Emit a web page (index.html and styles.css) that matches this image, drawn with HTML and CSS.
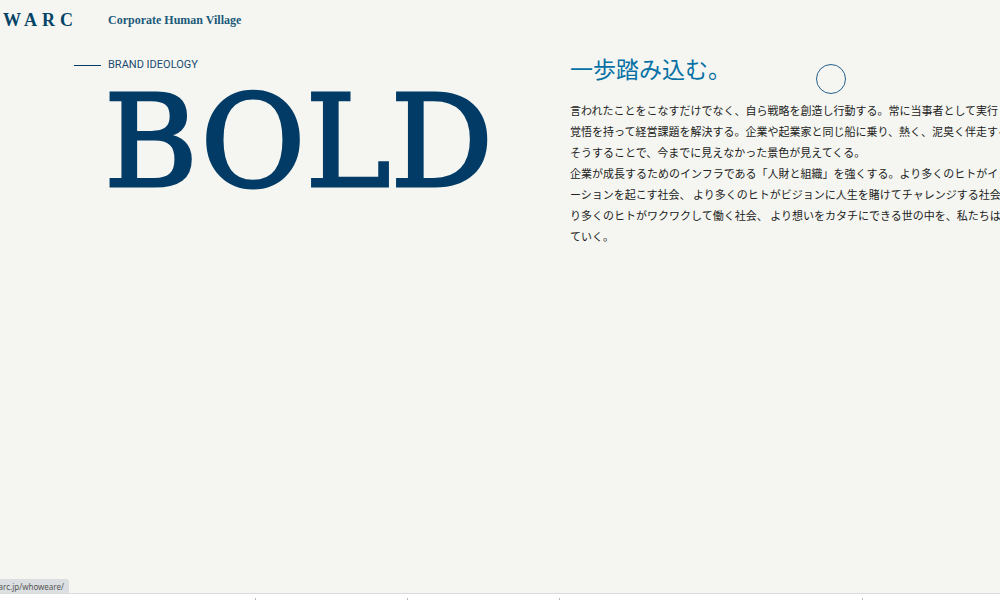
FILE: index.html
```html
<!DOCTYPE html>
<html lang="ja">
<head>
    <meta charset="UTF-8">
    <meta name="viewport" content="width=device-width, initial-scale=1.0">
    <title>WARC | Corporate Human Village</title>
    <link rel="stylesheet" href="styles.css">
</head>
<body>
    <!-- Header -->
    <header class="header">
        <a class="logo" href="#">WARC</a>
        <p class="tagline">Corporate Human Village</p>
    </header>

    <!-- Brand ideology -->
    <main class="ideology">
        <section class="ideology-title">
            <p class="label">BRAND IDEOLOGY</p>
            <h1>BOLD</h1>
        </section>
        <section class="ideology-text">
            <h2>一歩踏み込む。</h2>
            <p>言われたことをこなすだけでなく、自ら戦略を創造し行動する。常に当事者として実行し、<br>
            覚悟を持って経営課題を解決する。企業や起業家と同じ船に乗り、熱く、泥臭く伴走する。<br>
            そうすることで、今までに見えなかった景色が見えてくる。<br>
            企業が成長するためのインフラである「人財と組織」を強くする。より多くのヒトがイノベ<br>
            ーションを起こす社会、 より多くのヒトがビジョンに人生を賭けてチャレンジする社会、<br>
            り多くのヒトがワクワクして働く社会、 より想いをカタチにできる世の中を、私たちは創<br>
            ていく。</p>
        </section>
    </main>

    <!-- Round mouse cursor -->
    <div class="cursor"></div>

    <!-- Bottom bar -->
    <footer class="bottom">
        <div class="status"><span>warc.jp/whoweare/</span></div>
        <div class="tabs">
            <div class="tab tab-first"></div>
            <div class="tab"></div>
            <div class="tab"></div>
            <div class="tab tab-wide"></div>
        </div>
    </footer>
</body>
</html>
```
FILE: styles.css
```css
* {
    margin: 0;
    padding: 0;
    box-sizing: border-box;
}

body {
    font-family: "Noto Sans CJK JP", sans-serif;
    background-color: #f5f6f1;
    color: #222;
    display: flex;
    flex-direction: column;
    min-height: 100vh;
    overflow: hidden;
}

.header {
    display: flex;
    align-items: center;
    gap: 30px;
    height: 40px;
    padding-left: 3px;
    font-family: "Liberation Serif", serif;
    font-weight: bold;
    color: #044466;
}

.logo {
    font-size: 18px;
    letter-spacing: 5px;
    color: #044466;
    text-decoration: none;
}

.tagline {
    font-size: 12px;
    color: #1c5a7a;
}

.ideology {
    display: grid;
    grid-template-columns: 57% 1fr;
    padding-top: 16px;
    flex-grow: 1;
}

.label {
    display: flex;
    align-items: center;
    gap: 7px;
    padding-left: 74px;
    font-family: Roboto, sans-serif;
    font-size: 11px;
    line-height: 18px;
    color: #1b4a70;
}

.label::before {
    content: "";
    width: 27px;
    height: 1px;
    background-color: #023b66;
}

h1 {
    padding-left: 104px;
    font-family: "DejaVu Serif", serif;
    font-size: 128px;
    font-weight: normal;
    line-height: 136px;
    color: #023b66;
    -webkit-text-stroke: 3px #023b66;
}

h2 {
    font-size: 23px;
    font-weight: normal;
    line-height: 24px;
    color: #0671a5;
}

.ideology-text p {
    margin-top: 20px;
    font-size: 11px;
    line-height: 21px;
    white-space: nowrap;
}

.cursor {
    position: absolute;
    left: 816px;
    top: 64px;
    width: 30px;
    height: 30px;
    border: 1px solid #24608f;
    border-radius: 50%;
}

.status {
    display: flex;
    justify-content: flex-end;
    width: 69px;
    height: 14px;
    padding-right: 5px;
    overflow: hidden;
    background-color: #dcdfe1;
    border-top-right-radius: 3px;
    font-family: "Noto Sans", sans-serif;
    font-size: 8px;
    line-height: 15px;
    color: #555;
}

.tabs {
    display: flex;
    height: 7px;
    padding-top: 4px;
    background-color: #fefefe;
    border-top: 1px solid #d9dada;
}

.tab {
    width: 152px;
    border-right: 1px solid #bbb;
}

.tab-first {
    width: 256px;
}

.tab-wide {
    width: 303px;
}
```
